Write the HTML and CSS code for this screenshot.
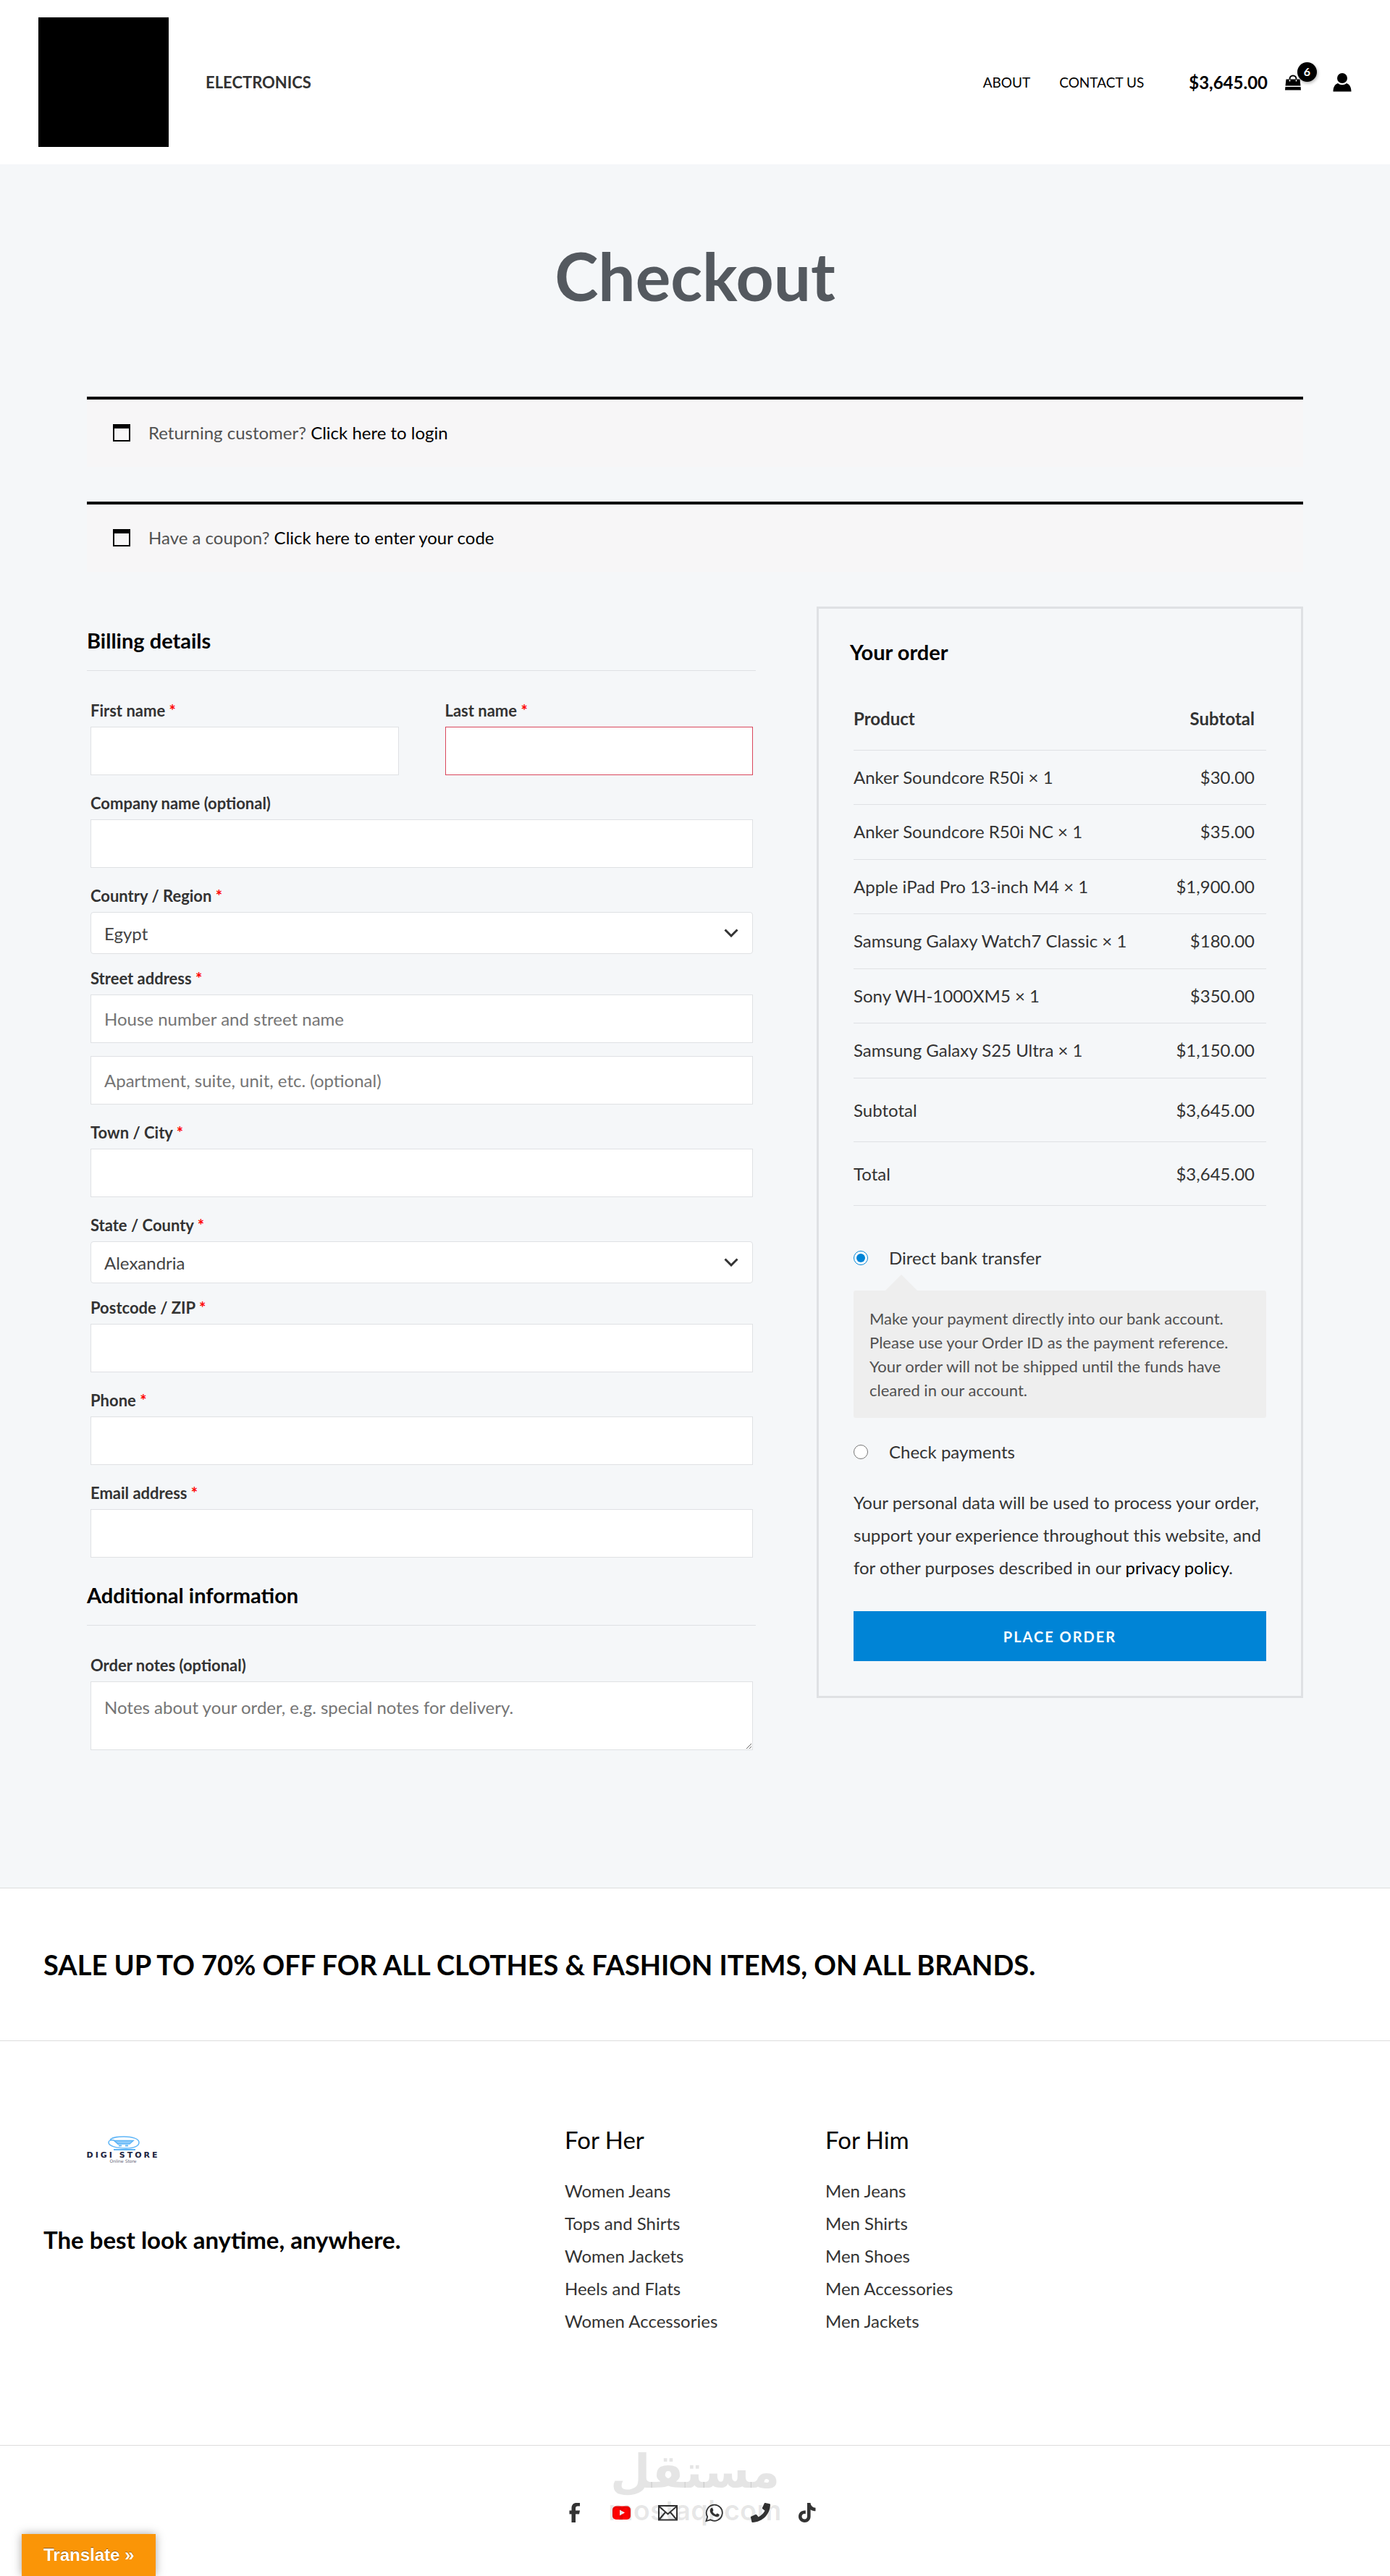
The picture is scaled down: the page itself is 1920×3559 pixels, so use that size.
FILE: index.html
```html
<!DOCTYPE html>
<html lang="en">
<head>
  <meta charset="UTF-8">
  <meta name="viewport" content="width=device-width, initial-scale=1.0">
  <title>Checkout</title>
  <link rel="stylesheet" href="styles.css">
</head>
<body>
  <header class="site-header">
    <a href="#" class="logo" aria-label="Home"></a>
    <nav class="main-nav">
      <a href="#">ELECTRONICS</a>
    </nav>
    <nav class="side-nav">
      <a href="#">ABOUT</a>
      <a href="#">CONTACT US</a>
    </nav>
    <a href="#" class="cart">
      <span class="cart-total">$3,645.00</span>
      <span class="cart-icon">
        <svg width="22" height="22" viewBox="0 0 22 22">
          <path d="M1.500 6.500H20.500L21.500 15.500H.5Z M.4 17H21.600L22 21.500H0Z" fill="#000"/>
          <path d="M6.500 9.500V6a4.500 4.500 0 0 1 9 0V9.500" fill="none" stroke="#000" stroke-width="2"/>
          <path d="M6.500 7V9.500M15.500 7V9.500" stroke="#fff" stroke-width="1.500"/>
        </svg>
        <span class="cart-count">6</span>
      </span>
    </a>
    <a href="#" class="account" aria-label="Account">
      <svg width="26" height="26" viewBox="0 0 26 26">
        <ellipse cx="13" cy="7" rx="7" ry="7" fill="#000"/>
        <path d="M.5 25.500C.5 19 3 15.500 7 14c3.500 3 8.500 3 12 0 4 1.500 6.500 5 6.500 11.500Z" fill="#000"/>
      </svg>
    </a>
  </header>

  <main class="page">
    <h1>Checkout</h1>

    <div class="notice">
      <svg class="notice-icon" width="24" height="24" viewBox="0 0 24 24"><path d="M1 1H23V23H1Z" fill="none" stroke="#000" stroke-width="2"/><path d="M0 0H24V6H0Z"/></svg>
      <p>Returning customer? <a href="#">Click here to login</a></p>
    </div>
    <div class="notice">
      <svg class="notice-icon" width="24" height="24" viewBox="0 0 24 24"><path d="M1 1H23V23H1Z" fill="none" stroke="#000" stroke-width="2"/><path d="M0 0H24V6H0Z"/></svg>
      <p>Have a coupon? <a href="#">Click here to enter your code</a></p>
    </div>

    <form class="checkout">
      <div class="details">
        <h3>Billing details</h3>
        <div class="fields">
          <div class="name-row">
            <div class="field">
              <label for="first-name">First name <span class="required">*</span></label>
              <input type="text" id="first-name">
            </div>
            <div class="field invalid">
              <label for="last-name">Last name <span class="required">*</span></label>
              <input type="text" id="last-name">
            </div>
          </div>
          <div class="field">
            <label for="company">Company name (optional)</label>
            <input type="text" id="company">
          </div>
          <div class="field select-field">
            <label for="country">Country / Region <span class="required">*</span></label>
            <div class="select-box">
              <select id="country"><option>Egypt</option></select>
              <svg class="arrow" width="20" height="12" viewBox="0 0 20 12"><path d="M1.500 1.500L10 10L18.500 1.500" fill="none" stroke="#333" stroke-width="3"/></svg>
            </div>
          </div>
          <div class="field">
            <label for="street">Street address <span class="required">*</span></label>
            <input type="text" id="street" placeholder="House number and street name">
            <input type="text" class="second-line" aria-label="Apartment" placeholder="Apartment, suite, unit, etc. (optional)">
          </div>
          <div class="field">
            <label for="city">Town / City <span class="required">*</span></label>
            <input type="text" id="city">
          </div>
          <div class="field select-field">
            <label for="state">State / County <span class="required">*</span></label>
            <div class="select-box">
              <select id="state"><option>Alexandria</option></select>
              <svg class="arrow" width="20" height="12" viewBox="0 0 20 12"><path d="M1.500 1.500L10 10L18.500 1.500" fill="none" stroke="#333" stroke-width="3"/></svg>
            </div>
          </div>
          <div class="field">
            <label for="postcode">Postcode / ZIP <span class="required">*</span></label>
            <input type="text" id="postcode">
          </div>
          <div class="field">
            <label for="phone">Phone <span class="required">*</span></label>
            <input type="tel" id="phone">
          </div>
          <div class="field">
            <label for="email">Email address <span class="required">*</span></label>
            <input type="email" id="email">
          </div>
        </div>

        <h3 class="additional">Additional information</h3>
        <div class="fields">
          <div class="field">
            <label for="notes">Order notes (optional)</label>
            <textarea id="notes" placeholder="Notes about your order, e.g. special notes for delivery."></textarea>
          </div>
        </div>
      </div>

      <div class="order">
        <h3>Your order</h3>
        <div class="order-body">
          <table>
            <thead>
              <tr><th>Product</th><th>Subtotal</th></tr>
            </thead>
            <tbody>
              <tr><td>Anker Soundcore R50i × 1</td><td>$30.00</td></tr>
              <tr><td>Anker Soundcore R50i NC × 1</td><td>$35.00</td></tr>
              <tr><td>Apple iPad Pro 13-inch M4 × 1</td><td>$1,900.00</td></tr>
              <tr><td>Samsung Galaxy Watch7 Classic × 1</td><td>$180.00</td></tr>
              <tr><td>Sony WH-1000XM5 × 1</td><td>$350.00</td></tr>
              <tr><td>Samsung Galaxy S25 Ultra × 1</td><td>$1,150.00</td></tr>
            </tbody>
            <tfoot>
              <tr><td>Subtotal</td><td>$3,645.00</td></tr>
              <tr><td>Total</td><td>$3,645.00</td></tr>
            </tfoot>
          </table>

          <div class="payment">
            <label class="method"><input type="radio" name="payment" checked>Direct bank transfer</label>
            <div class="payment-box">
              Make your payment directly into our bank account. Please use your Order ID as the payment reference. Your order will not be shipped until the funds have cleared in our account.
            </div>
            <label class="method"><input type="radio" name="payment">Check payments</label>
          </div>

          <p class="privacy">Your personal data will be used to process your order, support your experience throughout this website, and for other purposes described in our <a href="#">privacy policy</a>.</p>
          <button type="submit" class="place-order">PLACE ORDER</button>
        </div>
      </div>
    </form>
  </main>

  <footer>
    <div class="sale">
      <h2>SALE UP TO 70% OFF FOR ALL CLOTHES &amp; FASHION ITEMS, ON ALL BRANDS.</h2>
    </div>

    <div class="footer-columns">
      <div class="brand">
        <svg width="180" height="90" viewBox="0 0 180 90">
          <g fill="none" stroke="#5eb5f7" stroke-width="1.500">
            <path d="M92 20C97 16 104 16 111 16c12 0 21 3 21 8s-7 8-18 8c-13 0-24-3-24-8 0-2 2-4 7-3l7 6"/>
            <path d="M98 21.500H124L119 26H103Z" fill="#8ecbfa"/>
            <path d="M104 28.500H108M113 28.500H117M97 34H127" stroke-width="2"/>
          </g>
          <text x="110" y="45" text-anchor="middle" class="logo-name">DIGI STORE</text>
          <text x="110" y="52" text-anchor="middle" class="logo-sub">Online Store</text>
        </svg>
        <h4>The best look anytime, anywhere.</h4>
      </div>
      <div class="links">
        <h5>For Her</h5>
        <a href="#">Women Jeans</a>
        <a href="#">Tops and Shirts</a>
        <a href="#">Women Jackets</a>
        <a href="#">Heels and Flats</a>
        <a href="#">Women Accessories</a>
      </div>
      <div class="links">
        <h5>For Him</h5>
        <a href="#">Men Jeans</a>
        <a href="#">Men Shirts</a>
        <a href="#">Men Shoes</a>
        <a href="#">Men Accessories</a>
        <a href="#">Men Jackets</a>
      </div>
    </div>

    <div class="bottom-bar">
      <div class="social">
        <a href="#" aria-label="Facebook">
          <svg width="27" height="27" viewBox="0 0 27 27"><path d="M8.500 27V15.500H5.500V10.500H8.500V7.500C8.500 2.500 11 0 15.500 0H20V4.500H17C15 4.500 14 5.500 14 7.500V10.500H20L19 15.500H14V27Z" fill="#333"/></svg>
        </a>
        <a href="#" aria-label="YouTube">
          <svg width="27" height="27" viewBox="0 0 27 27"><rect x="1" y="4.500" width="25" height="18.500" rx="5" fill="#f00"/><path d="M11 9.500L18 13.500L11 17.500Z" fill="#fff"/></svg>
        </a>
        <a href="#" aria-label="Email">
          <svg width="27" height="27" viewBox="0 0 27 27"><path d="M1 4H26V23.500H1ZM1 4.500L13.500 15.500L26 4.500M1.500 23L10 13M25.500 23L17 13" fill="none" stroke="#333" stroke-width="2"/></svg>
        </a>
        <a href="#" aria-label="WhatsApp">
          <svg width="27" height="27" viewBox="0 0 27 27"><path d="M2.500 25L4.200 19.200A11 11 0 1 1 8.300 23.300Z" fill="none" stroke="#333" stroke-width="1.800"/><path d="M9 7.500c1-1 2-.7 2.300 0l1 2.500c.2.800-1.100 1.600-.9 2.200 1 1.800 2.400 3 4.300 3.800.6.200 1.400-1.700 2-1.500l2.600 1.300c.6.300.4 2-.5 2.800-1.500 1.300-3.800 1-6.800-.6-3-1.800-5.500-5-5.300-7.500.1-1.300.6-2.300 1.300-3Z" fill="#333"/></svg>
        </a>
        <a href="#" aria-label="Phone">
          <svg width="27" height="27" viewBox="0 0 27 27"><path d="M20 0L26 1.300C26.800 1.500 27 2 27 2.500 26.500 16 16 26.500 2.500 27 2 27 1.500 26.800 1.300 26L0 20C-.1 19.400 0 19 .7 18.700L6.800 16C7.300 15.800 8 16 8.300 16.400L10.700 19.500C14.500 17.500 17.500 14.500 19.500 10.700L16.400 8.300C16 8 15.800 7.300 16 6.800L18.700.7C19 0 19.500-.1 20 0Z" fill="#333"/></svg>
        </a>
        <a href="#" aria-label="TikTok">
          <svg width="27" height="27" viewBox="0 0 27 27"><path d="M14 0H18.500C19 4 21.500 6.500 25.500 6.800V11.300C23 11.300 20.500 10.500 18.600 9.200V18.500C18.600 24 14.800 27 10.500 27 5.500 27 2 23.300 2 18.800 2 13.500 6.500 9.800 11.800 10.500V15.200C9 14.400 6.500 16 6.500 18.700 6.500 21 8.300 22.500 10.300 22.500 12.500 22.500 14 21 14 18.500Z" fill="#333"/></svg>
        </a>
      </div>
      <div class="watermark">
        <span class="watermark-ar" lang="ar">مستقل</span>
        <span class="watermark-en">mostaql.com</span>
      </div>
    </div>
  </footer>

  <button type="button" class="translate">Translate »</button>
</body>
</html>
```
FILE: styles.css
```css
* {
  box-sizing: border-box;
}

body {
  margin: 0;
  font-family: Lato, "Liberation Sans", sans-serif;
  font-size: 24px;
  line-height: 45px;
  color: #333;
  background-color: #fff;
}

a {
  color: #000;
  text-decoration: none;
}

h1, h2, h3, h4, h5, p {
  margin: 0;
}

/* header */
.site-header {
  display: flex;
  align-items: center;
  padding: 24px 53px;
}

.logo {
  width: 180px;
  height: 179px;
  background-color: #000;
}

.main-nav {
  flex: 1;
  margin-left: 51px;
  font-size: 22px;
  font-weight: bold;
}

.main-nav a {
  color: #333;
}

.side-nav {
  display: flex;
  gap: 40px;
  margin-right: 62px;
  font-size: 19px;
}

.cart {
  display: flex;
  align-items: center;
  gap: 24px;
  margin-right: 44px;
  font-weight: bold;
}

.cart-icon {
  position: relative;
  display: flex;
}

.cart-count {
  position: absolute;
  top: -17px;
  left: 17px;
  width: 27px;
  height: 27px;
  border-radius: 50%;
  background-color: #000;
  color: #fff;
  font-size: 16px;
  line-height: 25px;
  text-align: center;
  box-shadow: 1px 2px 4px rgba(0, 0, 0, 0.3);
}

.account {
  display: flex;
}

/* page */
.page {
  padding: 96px 120px 173px;
  background-color: #f5f7f9;
}

h1 {
  margin-bottom: 110px;
  font-size: 91px;
  line-height: 115px;
  color: #54595f;
  text-align: center;
}

.notice {
  display: flex;
  align-items: center;
  gap: 25px;
  margin-bottom: 48px;
  padding: 23px 36px 25px;
  border-top: 4px solid #000;
  background-color: #f7f6f7;
  color: #515151;
}

.checkout {
  display: flex;
  justify-content: space-between;
  align-items: flex-start;
}

h3 {
  font-size: 29px;
  line-height: 35px;
  color: #000;
}

/* billing form */
.details {
  width: 55%;
  padding-top: 29px;
}

.details h3 {
  margin-bottom: 33px;
  padding-bottom: 24px;
  border-bottom: 1px solid #dfe1e4;
}

.details .additional {
  margin-top: 34px;
}

.fields {
  display: flex;
  flex-direction: column;
  gap: 17px;
  padding: 0 4px 0 5px;
}

.additional + .fields {
  padding-bottom: 17px;
}

.name-row {
  display: grid;
  grid-template-columns: 1fr 1fr;
  gap: 64px;
}

.field label {
  display: block;
  font-size: 22px;
  line-height: 44px;
  font-weight: bold;
}

.required {
  color: #f00;
}

.field input,
.field textarea,
.field select {
  display: block;
  width: 100%;
  height: 67px;
  padding: 0 18px;
  border: 1px solid #dfe1e4;
  border-radius: 0;
  background-color: #fff;
  color: #444;
  font-family: inherit;
  font-size: 24px;
}

.field.invalid input {
  border-color: #d9475c;
}

.field .second-line {
  margin-top: 18px;
}

.field ::placeholder {
  color: #757575;
}

.field textarea {
  height: 95px;
  padding: 12px 18px;
  line-height: 45px;
}

.select-field {
  margin-bottom: -5px;
}

.select-box {
  position: relative;
}

.field select {
  height: 58px;
  border-radius: 4px;
  appearance: none;
}

.arrow {
  position: absolute;
  top: 23px;
  right: 20px;
}

/* order summary */
.order {
  width: 40%;
  padding: 42px 43px 48px;
  border: 3px solid #dfe1e4;
}

.order-body {
  padding: 31px 5px 0;
}

table {
  width: 100%;
  border-collapse: separate;
  border-spacing: 0;
}

th, td {
  padding: 15px 16px 15px 0;
  border-bottom: 1px solid #dfe1e4;
  text-align: left;
}

th {
  padding-top: 21px;
  padding-bottom: 21px;
}

tbody td {
  padding-top: 14px;
}

tfoot td {
  padding-top: 21px;
  padding-bottom: 21px;
}

tbody tr:nth-child(even) td {
  padding-bottom: 16px;
}

th:last-child,
td:last-child {
  text-align: right;
}

.payment {
  margin: 49px 0 25px;
}

.method {
  display: flex;
  align-items: center;
  gap: 29px;
}

.method input {
  width: 20px;
  height: 20px;
  margin: 0;
  accent-color: #0084d6;
}

.payment-box {
  position: relative;
  margin: 23px 0 24px;
  padding: 22px;
  border-radius: 3px;
  background-color: #eee;
  color: #515151;
  font-size: 22px;
  line-height: 33px;
}

.payment-box::before {
  content: "";
  position: absolute;
  top: -22px;
  left: 44px;
  border: 22px solid transparent;
  border-top: 0;
  border-bottom-color: #eee;
}

.place-order {
  width: 100%;
  height: 69px;
  margin-top: 38px;
  border: 0;
  background-color: #0084d6;
  color: #fff;
  font-family: inherit;
  font-size: 20px;
  font-weight: bold;
  letter-spacing: 2px;
}

/* footer */
.sale {
  padding: 82px 60px;
  border-top: 1px solid #ddd;
  border-bottom: 1px solid #ddd;
}

h2 {
  font-size: 38px;
  line-height: 46px;
  color: #000;
}

.footer-columns {
  display: grid;
  grid-template-columns: 2fr 1fr 1fr 1fr;
  padding: 116px 60px 149px;
}

.brand svg {
  display: block;
  margin-bottom: 48px;
}

.logo-name {
  font: bold 11px "DejaVu Sans", sans-serif;
  letter-spacing: 3px;
  fill: #1d2340;
}

.logo-sub {
  font: 6px "DejaVu Sans", sans-serif;
  fill: #667;
}

h4, h5 {
  font-size: 33px;
  line-height: 40px;
  color: #000;
}

h5 {
  margin-bottom: 28px;
  font-weight: normal;
}

.links a {
  display: block;
  color: #333;
}

.bottom-bar {
  position: relative;
  padding: 79px 0 74px;
  border-top: 1px solid #ddd;
}

.social {
  display: flex;
  justify-content: center;
  gap: 37px;
  padding-right: 12px;
}

.social svg {
  display: block;
}

/* watermark lies over the icons */
.watermark {
  position: absolute;
  top: 0;
  left: 0;
  right: 0;
  display: flex;
  flex-direction: column;
  align-items: center;
  color: rgba(0, 0, 0, 0.1);
  pointer-events: none;
}

.watermark-ar {
  font-family: "DejaVu Sans", sans-serif;
  font-size: 64px;
  line-height: 72px;
  font-weight: bold;
}

.watermark-en {
  font-family: Inter, sans-serif;
  font-size: 38px;
  line-height: 34px;
  font-weight: 600;
}

.translate {
  position: fixed;
  left: 30px;
  bottom: 0;
  padding: 15px 30px;
  border: 0;
  background-color: #fa9507;
  color: #fff;
  font: bold 24px/28px "Liberation Sans", sans-serif;
  box-shadow: 0 0 12px rgba(0, 0, 0, 0.35);
  text-shadow: 0 -1px 0 rgba(0, 0, 0, 0.4);
}
```
